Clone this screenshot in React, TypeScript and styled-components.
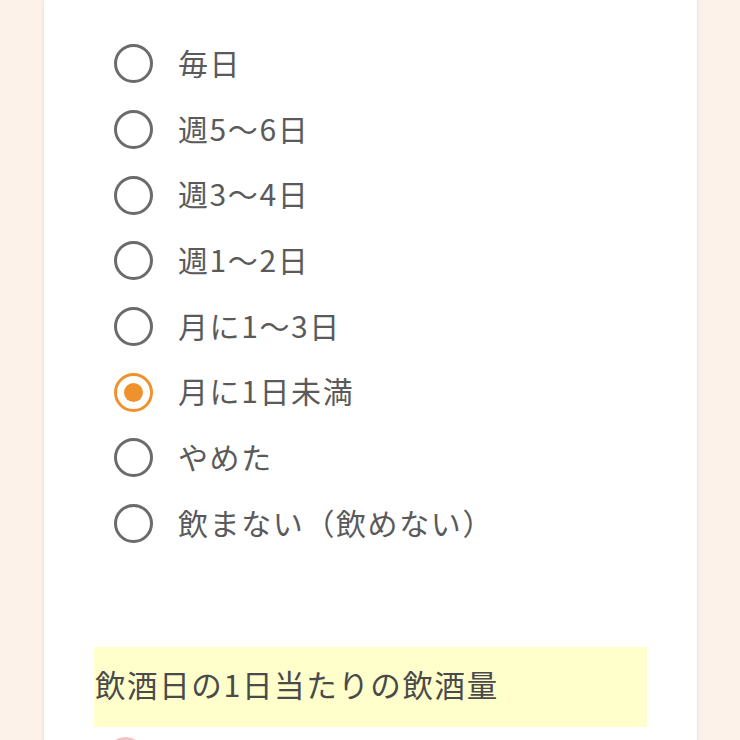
import React from "react";
import styled, { createGlobalStyle } from "styled-components";

const Global = createGlobalStyle`
  html, body { margin: 0; padding: 0; background: #fcf2e9; }
  body { font-family: "Noto Sans CJK JP", "Noto Sans", sans-serif; }
`;

const Page = styled.div`
  height: 740px;
  overflow: hidden;
  padding-left: 44px;
`;

const Card = styled.div`
  width: 653px;
  height: 760px;
  background: #ffffff;
  box-shadow: 0 0 3px rgba(200, 170, 140, 0.35);
  padding: 31px 50px 0 50px;
  box-sizing: border-box;
`;

const List = styled.div`
  display: flex;
  flex-direction: column;
  padding-left: 20px;
`;

const Row = styled.label`
  display: flex;
  align-items: center;
  height: 65.7px;
  gap: 25px;
`;

const Radio = styled.span<{ $checked?: boolean; $tone?: string }>`
  width: 39px;
  height: 39px;
  box-sizing: border-box;
  border-radius: 50%;
  border: 3px solid ${(p) => p.$tone ?? (p.$checked ? "#f0922b" : "#6b6b6b")};
  display: flex;
  align-items: center;
  justify-content: center;
  flex-shrink: 0;
  &::after {
    content: "";
    display: ${(p) => (p.$checked ? "block" : "none")};
    width: 19px;
    height: 19px;
    border-radius: 50%;
    background: #f0922b;
  }
`;

const Label = styled.span`
  font-size: 30px;
  color: #5a5a5a;
  line-height: 1;
  letter-spacing: 1.6px;
  padding-bottom: 4px;
`;

const Heading = styled.div`
  margin-top: 90px;
  height: 80px;
  background: #ffffcc;
  display: flex;
  align-items: center;
  padding-left: 1px;
  padding-bottom: 5px;
  box-sizing: border-box;
  font-size: 30.5px;
  color: #4a4a4a;
  letter-spacing: 1.6px;
`;

const NextList = styled.div`
  padding-left: 12px;
  padding-top: 10px;
`;

const options = [
  "毎日",
  "週5〜6日",
  "週3〜4日",
  "週1〜2日",
  "月に1〜3日",
  "月に1日未満",
  "やめた",
  "飲まない（飲めない）",
];

export default function App() {
  return (
    <>
      <Global />
      <Page>
        <Card>
          <List>
            {options.map((o, i) => (
              <Row key={o}>
                <Radio $checked={i === 5} />
                <Label>{o}</Label>
              </Row>
            ))}
          </List>
          <Heading>飲酒日の1日当たりの飲酒量</Heading>
          <NextList>
            <Radio $tone="#f2c4c4" />
          </NextList>
        </Card>
      </Page>
    </>
  );
}
